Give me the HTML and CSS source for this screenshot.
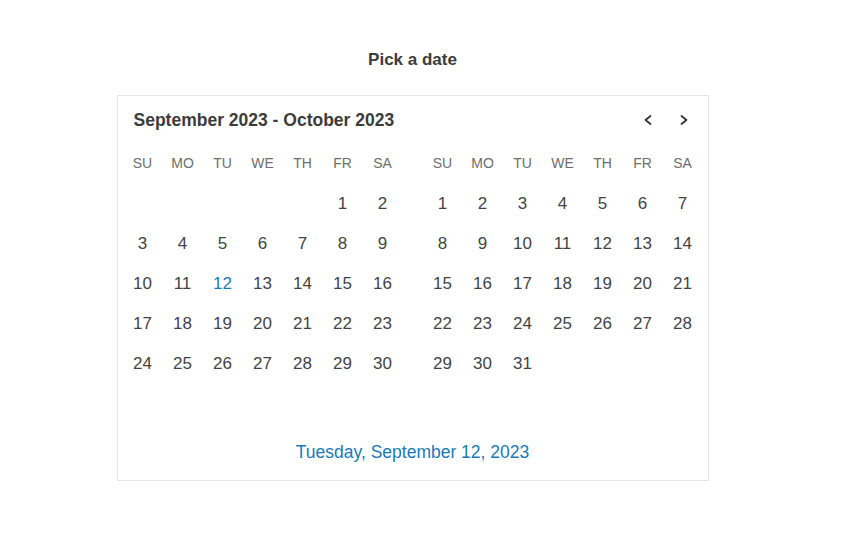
FILE: index.html
```html
<!DOCTYPE html>
<html lang="en">
<head>
<meta charset="utf-8">
<title>Pick a date</title>
<link rel="stylesheet" href="styles.css">
</head>
<body>
<main class="page">
  <h1 class="title">Pick a date</h1>
  <section class="calendar">
    <header class="cal-header">
      <h2 class="range">September 2023 - October 2023</h2>
      <div class="nav">
        <button class="nav-btn" aria-label="Previous month">
          <svg width="16" height="16" viewBox="0 0 16 16"><polyline points="10.5,4 5.5,8 10.5,12" fill="none" stroke="#333" stroke-width="1.8" stroke-linecap="round" stroke-linejoin="round"/></svg>
        </button>
        <button class="nav-btn" aria-label="Next month">
          <svg width="16" height="16" viewBox="0 0 16 16"><polyline points="5.5,4 10.5,8 5.5,12" fill="none" stroke="#333" stroke-width="1.8" stroke-linecap="round" stroke-linejoin="round"/></svg>
        </button>
      </div>
    </header>
    <div class="months">
      <div class="month">
        <span class="wd">SU</span><span class="wd">MO</span><span class="wd">TU</span><span class="wd">WE</span><span class="wd">TH</span><span class="wd">FR</span><span class="wd">SA</span>
        <span></span><span></span><span></span><span></span><span></span><span class="d">1</span><span class="d">2</span>
        <span class="d">3</span><span class="d">4</span><span class="d">5</span><span class="d">6</span><span class="d">7</span><span class="d">8</span><span class="d">9</span>
        <span class="d">10</span><span class="d">11</span><span class="d sel">12</span><span class="d">13</span><span class="d">14</span><span class="d">15</span><span class="d">16</span>
        <span class="d">17</span><span class="d">18</span><span class="d">19</span><span class="d">20</span><span class="d">21</span><span class="d">22</span><span class="d">23</span>
        <span class="d">24</span><span class="d">25</span><span class="d">26</span><span class="d">27</span><span class="d">28</span><span class="d">29</span><span class="d">30</span>
        <span class="d"></span>
      </div>
      <div class="month">
        <span class="wd">SU</span><span class="wd">MO</span><span class="wd">TU</span><span class="wd">WE</span><span class="wd">TH</span><span class="wd">FR</span><span class="wd">SA</span>
        <span class="d">1</span><span class="d">2</span><span class="d">3</span><span class="d">4</span><span class="d">5</span><span class="d">6</span><span class="d">7</span>
        <span class="d">8</span><span class="d">9</span><span class="d">10</span><span class="d">11</span><span class="d">12</span><span class="d">13</span><span class="d">14</span>
        <span class="d">15</span><span class="d">16</span><span class="d">17</span><span class="d">18</span><span class="d">19</span><span class="d">20</span><span class="d">21</span>
        <span class="d">22</span><span class="d">23</span><span class="d">24</span><span class="d">25</span><span class="d">26</span><span class="d">27</span><span class="d">28</span>
        <span class="d">29</span><span class="d">30</span><span class="d">31</span>
        <span></span><span></span><span></span><span></span>
        <span class="d"></span>
      </div>
    </div>
    <footer class="cal-footer">Tuesday, September 12, 2023</footer>
  </section>
</main>
</body>
</html>
```

FILE: styles.css
```css
* { box-sizing: border-box; }
html, body { margin: 0; padding: 0; background: #fff; }
body {
  font-family: "Liberation Sans", Arial, sans-serif;
  color: #444;
}
.page {
  display: flex;
  flex-direction: column;
  align-items: center;
  padding-top: 50px;
  padding-right: 21px;
}
.title {
  margin: 0 0 25px;
  font-size: 17px;
  line-height: 20px;
  font-weight: bold;
  color: #3c3c3c;
}
.calendar {
  width: 592px;
  border: 1px solid #e6e6e6;
  padding: 0 5px 18px;
}
.cal-header {
  display: flex;
  align-items: center;
  justify-content: space-between;
  padding: 13px 1px 0 11px;
  height: 35px;
}
.range {
  margin: 0;
  font-size: 17.5px;
  line-height: 22px;
  font-weight: bold;
  color: #3c3c3c;
}
.nav { display: flex; }
.nav-btn {
  width: 36px;
  height: 22px;
  padding: 0;
  border: 0;
  background: none;
  display: flex;
  align-items: center;
  justify-content: center;
}
.months {
  display: flex;
  gap: 20px;
  margin-top: 11px;
}
.month {
  display: grid;
  grid-template-columns: repeat(7, 40px);
  grid-template-rows: 42px;
  grid-auto-rows: 40px;
}
.month span {
  display: flex;
  align-items: center;
  justify-content: center;
}
.wd {
  font-size: 14px;
  color: #6e6e6e;
}
.d {
  font-size: 17px;
  color: #444;
}
.d.sel { color: #1a7ab8; }
.cal-footer {
  margin-top: 18px;
  text-align: center;
  font-size: 17.5px;
  line-height: 20px;
  color: #1a7ab8;
}
```
